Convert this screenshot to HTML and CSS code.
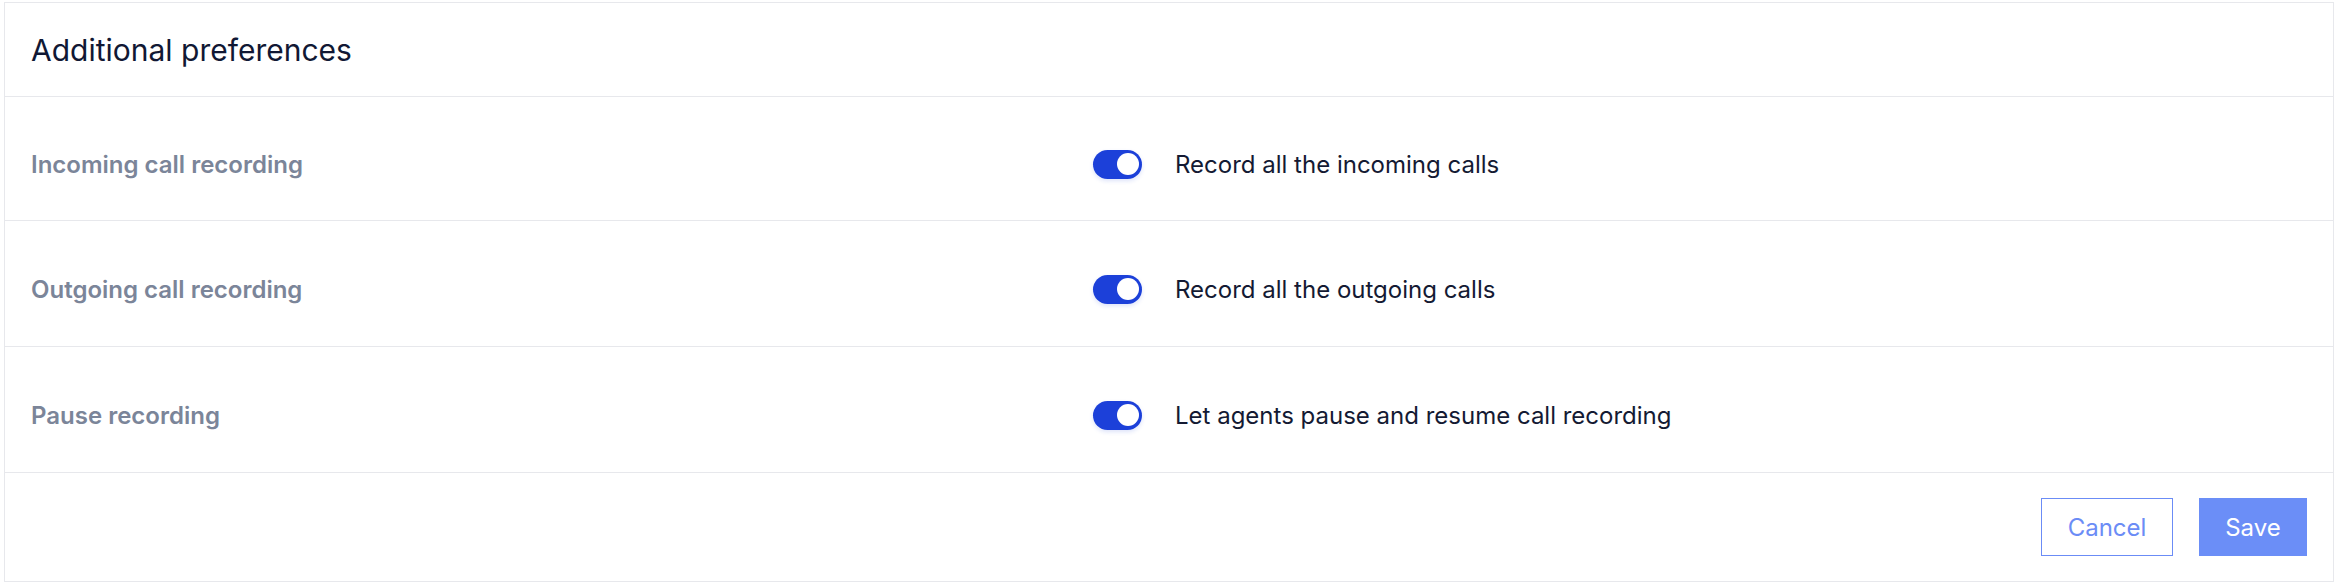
FILE: index.html
```html
<!DOCTYPE html>
<html>
  <head>
    <meta name="viewport" content="width=device-width, initial-scale=1" />
    <link rel="stylesheet" href="styles.css">
  </head>
  <body>
    <div class="card">
      <div class="card-header">
        <h2>Additional preferences</h2>
      </div>

      <div class="pref-row">
        <div class="pref-label">Incoming call recording</div>
        <label class="pref-value">
          <span class="toggle on"><span class="knob"></span></span>
          <span>Record all the incoming calls</span>
        </label>
      </div>

      <div class="pref-row">
        <div class="pref-label">Outgoing call recording</div>
        <label class="pref-value">
          <span class="toggle on"><span class="knob"></span></span>
          <span>Record all the outgoing calls</span>
        </label>
      </div>

      <div class="pref-row">
        <div class="pref-label">Pause recording</div>
        <label class="pref-value">
          <span class="toggle on"><span class="knob"></span></span>
          <span>Let agents pause and resume call recording</span>
        </label>
      </div>

      <div class="card-footer">
        <button type="button" class="btn btn-outline">Cancel</button>
        <button type="button" class="btn btn-primary">Save</button>
      </div>
    </div>
  </body>
</html>
```

FILE: styles.css
```css
body {
  font-family: Inter, "Open Sans", sans-serif;
  margin: 0;
  padding: 2px 0 2px 4px;
  background: #fff;
}

.card {
  border: 1px solid #e7e8ec;
  background: #fff;
}

.card-header {
  height: 93px;
  display: flex;
  align-items: center;
  padding: 0 26px;
  border-bottom: 1px solid #e7e8ec;
}

.card-header h2 {
  margin: 0;
  font-size: 30px;
  font-weight: 400;
  color: #111834;
}

.pref-row {
  height: 126px;
  display: flex;
  align-items: center;
  padding: 11px 26px 0 26px;
  box-sizing: border-box;
  border-bottom: 1px solid #e7e8ec;
}

.card-header + .pref-row {
  height: 124px;
}

.pref-label {
  width: 1062px;
  font-size: 24px;
  font-weight: 600;
  color: #7b8599;
}

.pref-value {
  display: flex;
  align-items: center;
  gap: 33px;
  font-size: 24px;
  color: #141a33;
}

.toggle {
  width: 49px;
  height: 29px;
  border-radius: 15px;
  background: #1c40d9;
  display: flex;
  align-items: center;
  justify-content: flex-end;
  padding: 0 3px;
  box-sizing: border-box;
  box-shadow: 0 2px 4px rgba(28, 64, 217, 0.15);
}

.knob {
  width: 22px;
  height: 22px;
  border-radius: 50%;
  background: #fff;
}

.card-footer {
  height: 108px;
  display: flex;
  align-items: center;
  justify-content: flex-end;
  gap: 26px;
  padding: 0 26px;
}

.btn {
  height: 58px;
  font-family: inherit;
  font-size: 24px;
  cursor: pointer;
}

.btn-outline {
  width: 132px;
  background: #fff;
  border: 1px solid #6b8cf6;
  color: #6b8cf6;
}

.btn-primary {
  width: 108px;
  background: #6b8ef7;
  border: none;
  color: #fff;
}
```
